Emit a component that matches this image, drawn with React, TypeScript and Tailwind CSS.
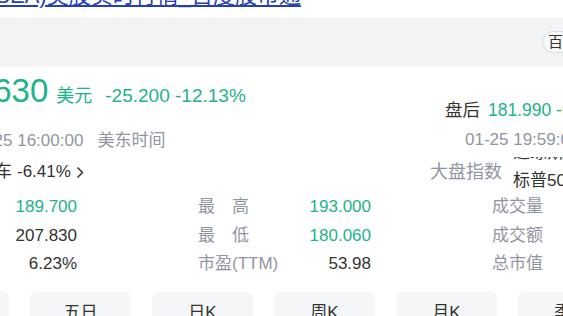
import React from 'react';

const stats = [
  [
    { label: '今　开', value: '189.700', tone: 'down' },
    { label: '昨　收', value: '207.830', tone: 'flat' },
    { label: '换手率', value: '6.23%', tone: 'flat' },
  ],
  [
    { label: '最　高', value: '193.000', tone: 'down' },
    { label: '最　低', value: '180.060', tone: 'down' },
    { label: '市盈(TTM)', value: '53.98', tone: 'flat' },
  ],
  [
    { label: '成交量', value: '412.56万', tone: 'flat' },
    { label: '成交额', value: '7.63亿', tone: 'flat' },
    { label: '总市值', value: '1032.8亿', tone: 'flat' },
  ],
];

const tabs = ['分时', '五日', '日K', '周K', '月K', '季K'];

export default function App() {
  return (
    <div className="w-[563px] h-[316px] overflow-hidden bg-white text-[#333] font-['Liberation_Sans','Noto_Sans_CJK_SC',sans-serif]">
      {/* page title link, scrolled mostly out of view */}
      <div className="h-[17px] overflow-hidden">
        <a className="block -mt-[15px] -ml-[12px] whitespace-nowrap text-[22px] leading-[22px] text-[#2440b3] underline underline-offset-2">
          (SEA)美股实时行情_百度股市通
        </a>
      </div>

      {/* gray header band */}
      <div className="h-[50px] bg-[#f3f4f6] flex items-center pl-[542px]">
        <span className="h-[22px] px-[5px] rounded-full border border-[#dcdde0] bg-white/40 text-[15px] leading-[20px] text-[#333] whitespace-nowrap">
          百度股市通
        </span>
      </div>

      {/* quote area */}
      <div className="h-[126px] flex">
        <div className="w-[430px] shrink-0">
          <div className="flex items-baseline h-[40px] mt-[4px] -ml-[71px] whitespace-nowrap text-[#1db38b]">
            <span className="text-[33px] leading-[40px]">182.630</span>
            <span className="ml-[8px] text-[18px]">美元</span>
            <span className="ml-[13px] text-[19px]">-25.200 -12.13%</span>
          </div>
          <div className="mt-[18px] h-[24px] leading-[24px] -ml-[31px] whitespace-nowrap text-[17px] text-[#9195a3]">
            01-25 16:00:00<span className="ml-[14px]">美东时间</span>
          </div>
          <div className="mt-[7px] h-[24px] leading-[24px] -ml-[56px] flex items-center whitespace-nowrap text-[17px] text-[#333]">
            电动汽车<span className="ml-[5px]">-6.41%</span>
            <svg className="ml-[5px]" width="8" height="13" viewBox="0 0 8 13" fill="none">
              <path d="M1.5 1.5 L6.5 6.5 L1.5 11.5" stroke="#333" strokeWidth="1.5" />
            </svg>
          </div>
        </div>

        <div className="flex-1 min-w-0">
          <div className="mt-[31px] h-[24px] leading-[24px] pl-[15px] whitespace-nowrap text-[17.5px]">
            <span className="text-[#333]">盘后</span>
            <span className="ml-[8px] text-[#1db38b]">181.990 -0.640 -0.35%</span>
          </div>
          <div className="mt-[6px] h-[24px] leading-[24px] pl-[35px] whitespace-nowrap text-[17px] text-[#9195a3]">
            01-25 19:59:00 美东时间
          </div>
          <div className="mt-[8px] flex items-start">
            <span className="h-[24px] leading-[24px] text-[18px] text-[#9195a3] whitespace-nowrap">大盘指数</span>
            <div className="ml-[11px] -mt-[3px] h-[36px] overflow-hidden">
              <div className="-mt-[18px] flex flex-col whitespace-nowrap text-[17px] text-[#333]">
                <span className="h-[28px] leading-[28px]">道琼斯 -0.12%</span>
                <span className="h-[28px] leading-[28px]">标普500 -0.07%</span>
              </div>
            </div>
          </div>
        </div>
      </div>

      {/* stats grid */}
      <div className="-ml-[96px] w-[761px] grid grid-cols-[173px_173px_173px] gap-x-[121px] text-[17px]">
        {stats.map((col, ci) => (
          <div key={ci} className="flex flex-col">
            {col.map((s) => (
              <div key={s.label} className="flex justify-between leading-[28.5px] whitespace-nowrap">
                <span className="text-[#9195a3]">{s.label}</span>
                <span className={s.tone === 'down' ? 'text-[#1db38b]' : 'text-[#333]'}>{s.value}</span>
              </div>
            ))}
          </div>
        ))}
      </div>

      {/* chart period tabs */}
      <div className="mt-[13px] -ml-[92px] flex gap-[21px]">
        {tabs.map((t) => (
          <div
            key={t}
            className="w-[101px] h-[42px] shrink-0 rounded-[6px] bg-[#f5f6f8] flex items-center justify-center text-[17px] text-[#333]"
          >
            {t}
          </div>
        ))}
      </div>
    </div>
  );
}
